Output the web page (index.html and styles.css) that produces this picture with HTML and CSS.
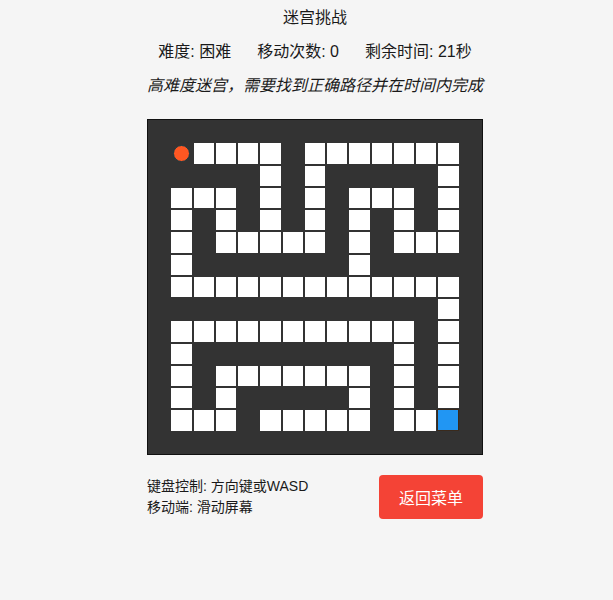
FILE: index.html
```html
<!DOCTYPE html>
<html lang="zh-CN">
<head>
<meta charset="utf-8">
<title>迷宫挑战</title>
<link rel="stylesheet" href="styles.css">
</head>
<body>
<div class="app">
  <h1 class="title">迷宫挑战</h1>
  <div class="stats">
    <span>难度: 困难</span>
    <span>移动次数: 0</span>
    <span>剩余时间: 21秒</span>
  </div>
  <p class="desc">高难度迷宫，需要找到正确路径并在时间内完成</p>
  <div class="maze">
    <div></div><div></div><div></div><div></div><div></div><div></div><div></div><div></div><div></div><div></div><div></div><div></div><div></div><div></div><div></div>
    <div></div><div class="start"><span class="player"></span></div><div class="p"></div><div class="p"></div><div class="p"></div><div class="p"></div><div></div><div class="p"></div><div class="p"></div><div class="p"></div><div class="p"></div><div class="p"></div><div class="p"></div><div class="p"></div><div></div>
    <div></div><div></div><div></div><div></div><div></div><div class="p"></div><div></div><div class="p"></div><div></div><div></div><div></div><div></div><div></div><div class="p"></div><div></div>
    <div></div><div class="p"></div><div class="p"></div><div class="p"></div><div></div><div class="p"></div><div></div><div class="p"></div><div></div><div class="p"></div><div class="p"></div><div class="p"></div><div></div><div class="p"></div><div></div>
    <div></div><div class="p"></div><div></div><div class="p"></div><div></div><div class="p"></div><div></div><div class="p"></div><div></div><div class="p"></div><div></div><div class="p"></div><div></div><div class="p"></div><div></div>
    <div></div><div class="p"></div><div></div><div class="p"></div><div class="p"></div><div class="p"></div><div class="p"></div><div class="p"></div><div></div><div class="p"></div><div></div><div class="p"></div><div class="p"></div><div class="p"></div><div></div>
    <div></div><div class="p"></div><div></div><div></div><div></div><div></div><div></div><div></div><div></div><div class="p"></div><div></div><div></div><div></div><div></div><div></div>
    <div></div><div class="p"></div><div class="p"></div><div class="p"></div><div class="p"></div><div class="p"></div><div class="p"></div><div class="p"></div><div class="p"></div><div class="p"></div><div class="p"></div><div class="p"></div><div class="p"></div><div class="p"></div><div></div>
    <div></div><div></div><div></div><div></div><div></div><div></div><div></div><div></div><div></div><div></div><div></div><div></div><div></div><div class="p"></div><div></div>
    <div></div><div class="p"></div><div class="p"></div><div class="p"></div><div class="p"></div><div class="p"></div><div class="p"></div><div class="p"></div><div class="p"></div><div class="p"></div><div class="p"></div><div class="p"></div><div></div><div class="p"></div><div></div>
    <div></div><div class="p"></div><div></div><div></div><div></div><div></div><div></div><div></div><div></div><div></div><div></div><div class="p"></div><div></div><div class="p"></div><div></div>
    <div></div><div class="p"></div><div></div><div class="p"></div><div class="p"></div><div class="p"></div><div class="p"></div><div class="p"></div><div class="p"></div><div class="p"></div><div></div><div class="p"></div><div></div><div class="p"></div><div></div>
    <div></div><div class="p"></div><div></div><div class="p"></div><div></div><div></div><div></div><div></div><div></div><div class="p"></div><div></div><div class="p"></div><div></div><div class="p"></div><div></div>
    <div></div><div class="p"></div><div class="p"></div><div class="p"></div><div></div><div class="p"></div><div class="p"></div><div class="p"></div><div class="p"></div><div class="p"></div><div></div><div class="p"></div><div class="p"></div><div class="goal"></div><div></div>
    <div></div><div></div><div></div><div></div><div></div><div></div><div></div><div></div><div></div><div></div><div></div><div></div><div></div><div></div><div></div>
  </div>
  <div class="footer">
    <div class="help">
      <div>键盘控制: 方向键或WASD</div>
      <div>移动端: 滑动屏幕</div>
    </div>
    <button class="back">返回菜单</button>
  </div>
</div>
</body>
</html>
```

FILE: styles.css
```css
html, body {
  margin: 0;
  padding: 0;
  background: #f5f5f5;
}

body {
  font-family: "Liberation Sans", "Noto Sans CJK SC", sans-serif;
  color: #1a1a1a;
  padding: 6px 0 0 17px;
}

.app {
  width: 336px;
  margin: 0 auto;
}

.title {
  margin: 0;
  font-size: 16px;
  font-weight: normal;
  line-height: 24px;
  text-align: center;
}

.stats {
  margin-top: 10px;
  display: flex;
  justify-content: center;
  gap: 26px;
  font-size: 16px;
  line-height: 24px;
  white-space: nowrap;
}

.desc {
  margin: 10px 0 0;
  font-size: 16px;
  line-height: 24px;
  font-style: italic;
  text-align: center;
  white-space: nowrap;
}

.maze {
  margin-top: 21px;
  width: 334px;
  height: 334px;
  border: 1px solid #111;
  background: #333;
  display: grid;
  grid-template-columns: repeat(15, 1fr);
  grid-template-rows: repeat(15, 1fr);
}

.maze > div {
  margin: 1px;
  display: flex;
  align-items: center;
  justify-content: center;
}

.maze > .p {
  background: #fff;
}

.maze > .goal {
  background: #2196f3;
  border: 1px solid #3a2a1c;
  margin: 0 1px 1px 0;
}

.player {
  width: 15px;
  height: 15px;
  border-radius: 50%;
  background: #ff5722;
  border: 1px solid #173a44;
}

.footer {
  margin-top: 20px;
  display: flex;
  justify-content: space-between;
  align-items: center;
}

.help {
  font-size: 14px;
  line-height: 21px;
  color: #1a1a1a;
}

.back {
  width: 104px;
  height: 44px;
  border: none;
  border-radius: 4px;
  background: #f44336;
  color: #fff;
  font-family: "Liberation Sans", "Noto Sans CJK SC", sans-serif;
  font-size: 16px;
  padding: 0;
}
```
